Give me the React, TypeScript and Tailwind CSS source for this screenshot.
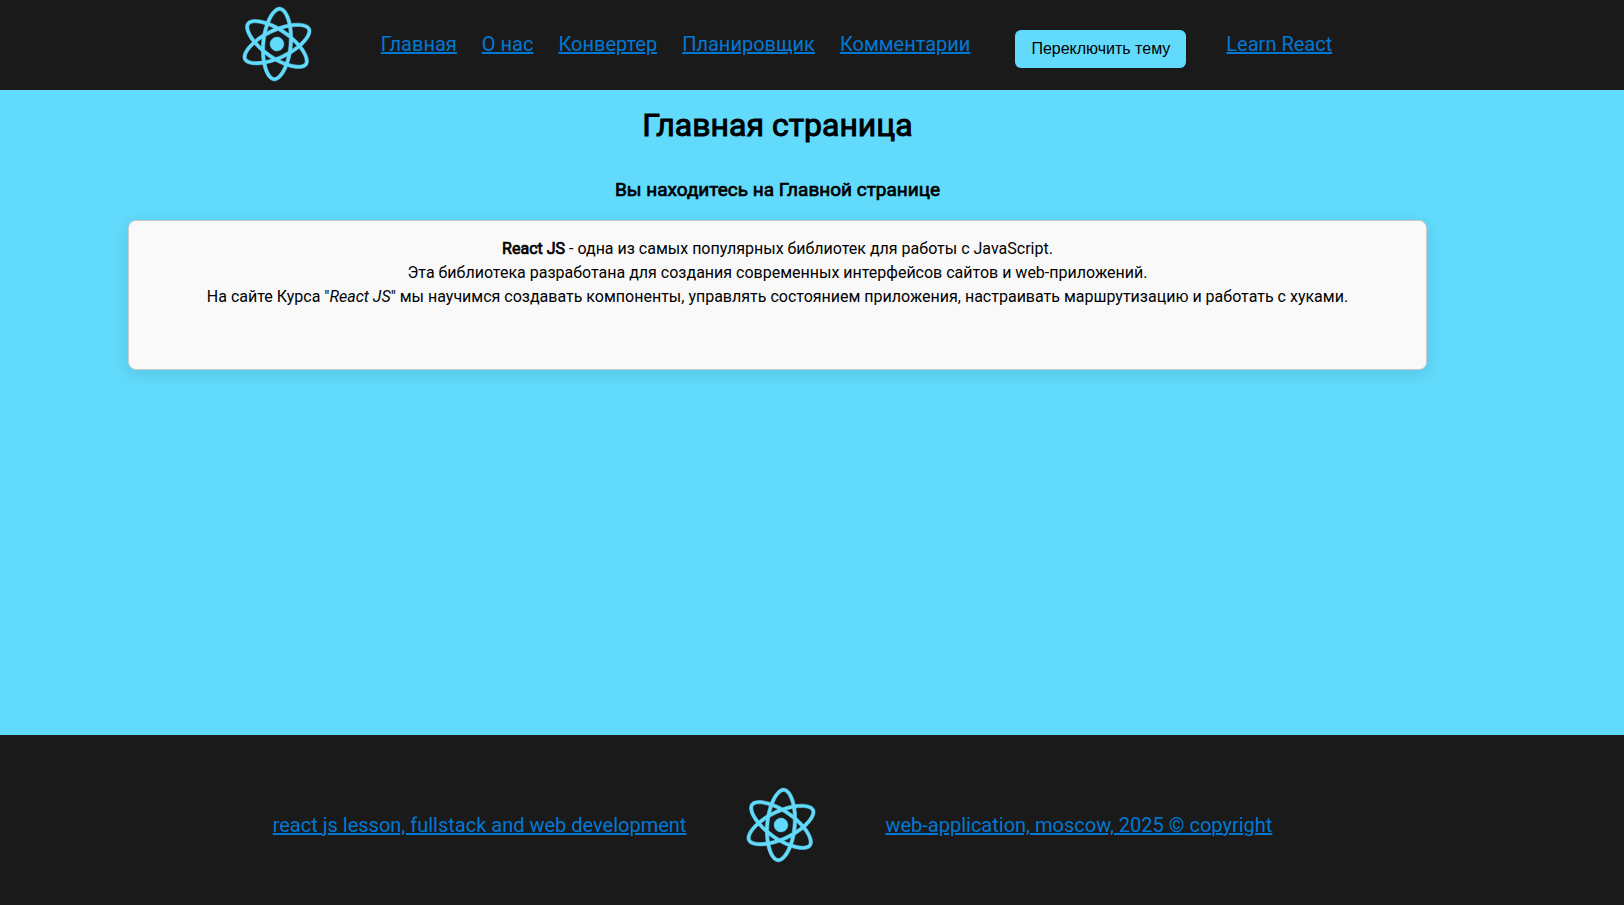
import { SiReact } from "react-icons/si";

const navLinks = ["Главная", "О нас", "Конвертер", "Планировщик", "Комментарии"];

function Logo() {
  return (
    <div className="flex size-20 shrink-0 items-center justify-center">
      <SiReact className="size-[74px] rotate-[35deg] overflow-visible stroke-current stroke-[0.15] text-[#61dafb]" aria-label="React" />
    </div>
  );
}

const linkClass = "text-xl text-[#0078d4] underline whitespace-nowrap";

export default function App() {
  return (
    <div className="flex min-h-screen flex-col bg-[#61dafb] font-[Roboto,sans-serif] text-black">
      <header className="flex items-center justify-center bg-[#1a1a1a] pt-1 pr-[55px] pb-1.5">
        <Logo />
        <nav className="ml-16 flex gap-[25px]">
          {navLinks.map((label) => (
            <a key={label} href="#" className={linkClass}>
              {label}
            </a>
          ))}
        </nav>
        <button
          type="button"
          className="mt-2.5 mr-10 ml-[45px] cursor-pointer rounded-md bg-[#61dafb] px-4 py-[7px] font-['Liberation_Sans',sans-serif] text-base whitespace-nowrap"
        >
          Переключить тему
        </button>
        <a href="#" className={linkClass}>
          Learn React
        </a>
      </header>

      <main className="flex grow flex-col items-center pr-[69px] text-center">
        <h1 className="mt-[15px] text-[32px] leading-10 [-webkit-text-stroke:1px_black]">Главная страница</h1>
        <h2 className="mt-[31px] text-[19px] leading-7 [-webkit-text-stroke:0.7px_black]">
          Вы находитесь на Главной странице
        </h2>
        <section className="mt-4 min-h-[150px] w-[80vw] rounded-lg border border-[#ccc] bg-[#f9f9f9] p-4 shadow-[0_4px_16px_rgba(0,0,0,0.1)]">
          <p>
            <strong className="font-normal [-webkit-text-stroke:0.7px_black]">React JS</strong> - одна из самых
            популярных библиотек для работы с JavaScript.
          </p>
          <p>Эта библиотека разработана для создания современных интерфейсов сайтов и web-приложений.</p>
          <p>
            На сайте Курса "<em>React JS</em>" мы научимся создавать компоненты, управлять состоянием приложения,
            настраивать маршрутизацию и работать с хуками.
          </p>
        </section>
      </main>

      <footer className="flex items-center justify-center bg-[#1a1a1a] pt-[50px] pr-[79px] pb-10">
        <a href="#" className={linkClass}>
          react js lesson, fullstack and web development
        </a>
        <div className="mr-16 ml-[55px]">
          <Logo />
        </div>
        <a href="#" className={linkClass}>
          web-application, moscow, 2025 © copyright
        </a>
      </footer>
    </div>
  );
}
